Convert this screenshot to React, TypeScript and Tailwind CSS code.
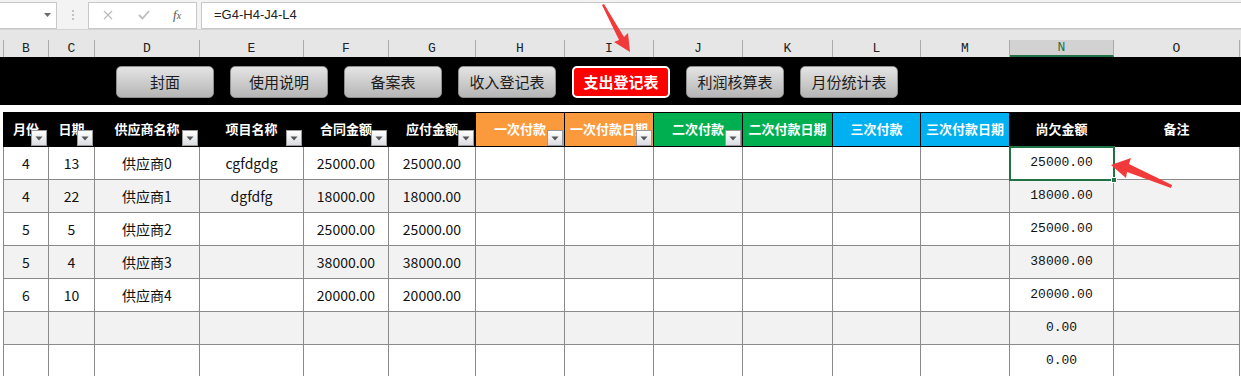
import React from "react"

const cols = [
  { letter: "B", w: "w-[45px]" },
  { letter: "C", w: "w-[46px]" },
  { letter: "D", w: "w-[105px]" },
  { letter: "E", w: "w-[104px]" },
  { letter: "F", w: "w-[85px]" },
  { letter: "G", w: "w-[87px]" },
  { letter: "H", w: "w-[89px]" },
  { letter: "I", w: "w-[89px]" },
  { letter: "J", w: "w-[89px]" },
  { letter: "K", w: "w-[90px]" },
  { letter: "L", w: "w-[88px]" },
  { letter: "M", w: "w-[89px]" },
  { letter: "N", w: "w-[104px]" },
  { letter: "O", w: "w-[126px]" },
]

const headers = [
  { label: "月份", bg: "bg-black", filter: true },
  { label: "日期", bg: "bg-black", filter: true },
  { label: "供应商名称", bg: "bg-black", filter: true },
  { label: "项目名称", bg: "bg-black", filter: true },
  { label: "合同金额", bg: "bg-black", filter: true },
  { label: "应付金额", bg: "bg-black", filter: true },
  { label: "一次付款", bg: "bg-[#fb9a3c]", filter: true },
  { label: "一次付款日期", bg: "bg-[#fb9a3c]", filter: true },
  { label: "二次付款", bg: "bg-[#00b050]", filter: true },
  { label: "二次付款日期", bg: "bg-[#00b050]", filter: false },
  { label: "三次付款", bg: "bg-[#00b0f0]", filter: false },
  { label: "三次付款日期", bg: "bg-[#00b0f0]", filter: false },
  { label: "尚欠金额", bg: "bg-black", filter: false },
  { label: "备注", bg: "bg-black", filter: false },
]

const rows = [
  ["4", "13", "供应商0", "cgfdgdg", "25000.00", "25000.00", "25000.00"],
  ["4", "22", "供应商1", "dgfdfg", "18000.00", "18000.00", "18000.00"],
  ["5", "5", "供应商2", "", "25000.00", "25000.00", "25000.00"],
  ["5", "4", "供应商3", "", "38000.00", "38000.00", "38000.00"],
  ["6", "10", "供应商4", "", "20000.00", "20000.00", "20000.00"],
  ["", "", "", "", "", "", "0.00"],
  ["", "", "", "", "", "", "0.00"],
]

const buttons = ["封面", "使用说明", "备案表", "收入登记表", "支出登记表", "利润核算表", "月份统计表"]

function FilterButton() {
  return (
    <span className="absolute right-[1px] bottom-0 flex h-[16px] w-[16px] items-center justify-center border border-[#9a9a9a] bg-gradient-to-b from-white to-[#dcdde2]">
      <svg width="8" height="5" viewBox="0 0 8 5">
        <path d="M0.5 0.5 L7.5 0.5 L4 4.5 Z" fill="#555" />
      </svg>
    </span>
  )
}

export default function App() {
  return (
    <div className="relative h-[376px] w-[1241px] overflow-hidden bg-white font-['Noto_Sans_CJK_SC',sans-serif]">
      {/* formula bar */}
      <div className="flex h-[30px] items-center gap-0 border-b border-[#d4d4d4] bg-[#f3f3f3] pt-[1px]">
        <div className="flex h-[27px] w-[57px] items-center justify-end border border-l-0 border-[#c8c8c8] bg-white pr-[5px]">
          <svg width="7" height="4" viewBox="0 0 7 4">
            <path d="M0 0 L7 0 L3.5 4 Z" fill="#6b6b6b" />
          </svg>
        </div>
        <div className="flex w-[31px] justify-center">
          <div className="flex flex-col gap-[2px]">
            <span className="h-[2px] w-[2px] bg-[#c2c2c2]" />
            <span className="h-[2px] w-[2px] bg-[#c2c2c2]" />
            <span className="h-[2px] w-[2px] bg-[#c2c2c2]" />
          </div>
        </div>
        <div className="flex h-[27px] w-[109px] items-center border border-[#c8c8c8] bg-white">
          <svg className="ml-[14px]" width="10" height="10" viewBox="0 0 10 10">
            <path d="M1 1 L9 9 M9 1 L1 9" stroke="#bdbdbd" strokeWidth="1.3" />
          </svg>
          <svg className="ml-[25px]" width="12" height="10" viewBox="0 0 12 10">
            <path d="M1 5 L4.5 8.5 L11 1" stroke="#bdbdbd" strokeWidth="1.8" fill="none" />
          </svg>
          <span className="ml-[23px] font-['Liberation_Serif',serif] text-[13px] italic text-[#555]">
            f<span className="text-[10px]">x</span>
          </span>
        </div>
        <div className="ml-[4px] flex h-[27px] flex-1 items-center border border-r-0 border-[#c8c8c8] bg-white pl-[12px] font-['Liberation_Sans',sans-serif] text-[13px] text-[#222]">
          =G4-H4-J4-L4
        </div>
      </div>

      {/* column letters */}
      <div className="flex h-[27px] items-end bg-[#e6e6e6] pl-[3px]">
        <div className="flex h-[17px] border-l border-[#ababab]">
          {cols.map((c) => (
            <div
              key={c.letter}
              className={`${c.w} flex items-center justify-center border-r border-[#ababab] font-['Liberation_Mono',monospace] text-[13px] ${
                c.letter === "N" ? "border-b-2 border-b-[#217346] bg-[#d2d2d2] text-[#217346]" : "text-[#222]"
              }`}
            >
              {c.letter}
            </div>
          ))}
        </div>
      </div>

      {/* button band */}
      <div className="flex h-[48px] gap-[16px] bg-black pl-[116px] pt-[9px]">
        {buttons.map((b) =>
          b === "支出登记表" ? (
            <div
              key={b}
              className="flex h-[32px] w-[98px] items-center justify-center rounded-[5px] border-2 border-white bg-[#ff0000] text-[15px] font-bold text-white"
            >
              {b}
            </div>
          ) : (
            <div
              key={b}
              className="flex h-[32px] w-[98px] items-center justify-center rounded-[5px] border border-[#8e8e8e] bg-gradient-to-b from-[#e4e4e4] to-[#b6b6b6] text-[15px] text-[#1c1c1c]"
            >
              {b}
            </div>
          )
        )}
      </div>

      {/* table */}
      <div className="pl-[3px] pt-[7px]">
        <table className="table-fixed border-collapse">
          <colgroup>
            {cols.map((c) => (
              <col key={c.letter} className={c.w} />
            ))}
          </colgroup>
          <thead>
            <tr className="h-[34px]">
              {headers.map((h) => (
                <th
                  key={h.label}
                  className={`relative border border-black p-0 text-center text-[13px] font-bold whitespace-nowrap text-white ${h.bg}`}
                >
                  <span className="relative top-[-1px]">{h.label}</span>
                  {h.filter && <FilterButton />}
                </th>
              ))}
            </tr>
          </thead>
          <tbody>
            {rows.map((r, i) => (
              <tr key={i} className={`h-[33px] ${i % 2 === 1 ? "bg-[#f2f2f2]" : "bg-white"}`}>
                {r.slice(0, 6).map((v, j) => (
                  <td key={j} className="border border-[#8a8a8a] p-0 text-center text-[14px] text-[#111]">
                    {v}
                  </td>
                ))}
                {[0, 1, 2, 3, 4, 5].map((k) => (
                  <td key={"e" + k} className="border border-[#8a8a8a] p-0" />
                ))}
                <td
                  className={`relative border border-[#8a8a8a] p-0 text-center font-['Liberation_Mono',monospace] text-[13px] text-[#111] ${
                    i === 0 ? "outline-2 -outline-offset-1 outline-[#217346]" : ""
                  }`}
                >
                  {r[6]}
                  {i === 0 && (
                    <span className="absolute right-[-4px] bottom-[-4px] h-[6px] w-[6px] border border-white bg-[#217346]" />
                  )}
                </td>
                <td className="border border-[#8a8a8a] p-0" />
              </tr>
            ))}
          </tbody>
        </table>
      </div>

      {/* annotation arrows */}
      <svg className="pointer-events-none absolute top-0 left-0" width="1241" height="376" viewBox="0 0 1241 376">
        <path d="M602 5 L604 4 L624 37 L628 33 L630 52 L614 42 L619 40 Z" fill="#f23a3a" />
        <path d="M1171 188 L1172 185 L1129 164 L1131 158 L1111 165 L1126 178 L1127 172 Z" fill="#f23a3a" />
      </svg>
    </div>
  )
}
